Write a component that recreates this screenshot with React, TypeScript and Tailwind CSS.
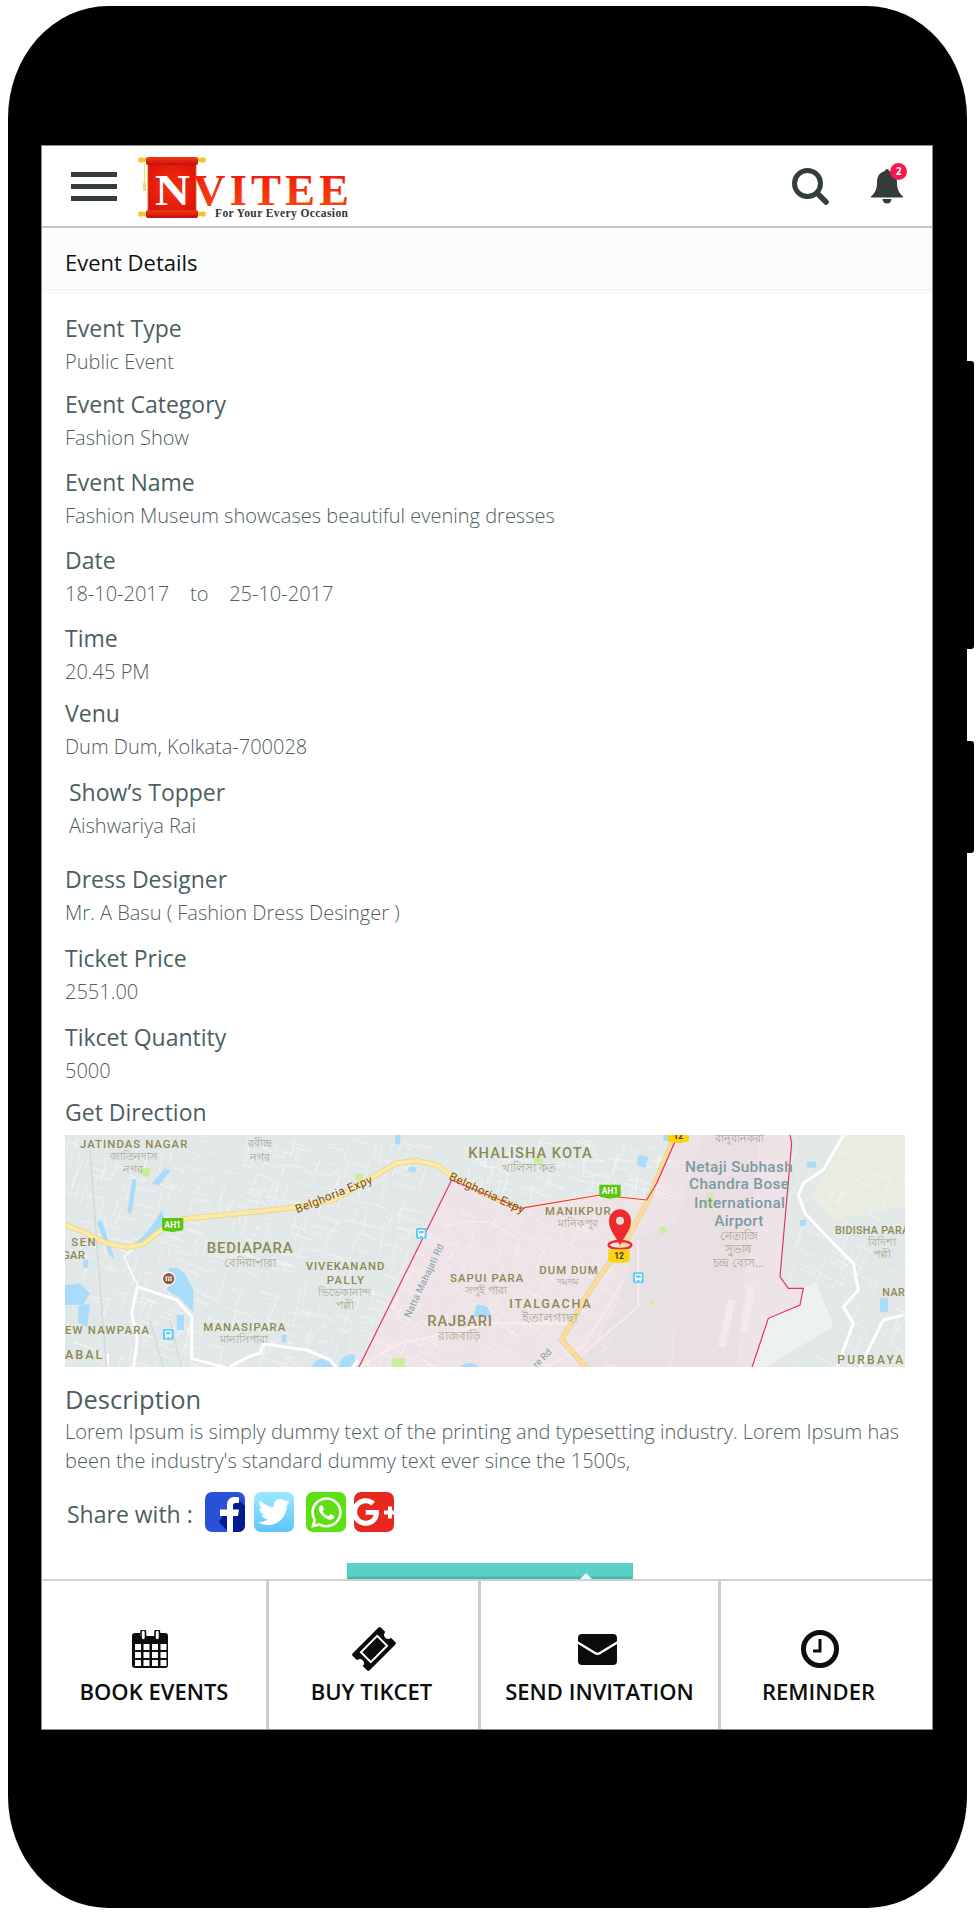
import React from "react";
import { FaTwitter, FaWhatsapp, FaGooglePlusG } from "react-icons/fa";

const fields: { l: string; v: React.ReactNode; cls: string }[] = [
  { l: "Event Type", v: "Public Event", cls: "mt-[22px]" },
  { l: "Event Category", v: "Fashion Show", cls: "mt-[10px]" },
  { l: "Event Name", v: "Fashion Museum showcases beautiful evening dresses", cls: "mt-[12px]" },
  { l: "Date", v: <span className="whitespace-pre">18-10-2017    to    25-10-2017</span>, cls: "mt-[12px]" },
  { l: "Time", v: "20.45 PM", cls: "mt-[12px]" },
  { l: "Venu", v: "Dum Dum, Kolkata-700028", cls: "mt-[9px]" },
  { l: "Show’s Topper", v: "Aishwariya Rai", cls: "mt-[13px] pl-[4px]" },
  { l: "Dress Designer", v: "Mr. A Basu ( Fashion Dress Desinger )", cls: "mt-[21px]" },
  { l: "Ticket Price", v: "2551.00", cls: "mt-[13px]" },
  { l: "Tikcet Quantity", v: "5000", cls: "mt-[13px]" },
];

function rng(seed: number) {
  let s = seed;
  return () => {
    s = (s * 16807) % 2147483647;
    return s / 2147483647;
  };
}

function streets(seed: number, x0: number, y0: number, x1: number, y1: number, n: number, angle: number) {
  const r = rng(seed);
  let d = "";
  for (let i = 0; i < n; i++) {
    const x = x0 + r() * (x1 - x0);
    const y = y0 + r() * (y1 - y0);
    const a = angle + (r() > 0.5 ? Math.PI / 2 : 0) + (r() - 0.5) * 0.25;
    const len = 15 + r() * 55;
    const x2 = x + Math.cos(a) * len;
    const y2 = y + Math.sin(a) * len;
    d += `M${x.toFixed(0)} ${y.toFixed(0)}L${x2.toFixed(0)} ${y2.toFixed(0)}`;
  }
  return d;
}

const PINK = "925,745 1205,180 1290,215 1410,265 1650,225 1790,240 1820,190 1875,65 1900,45 2220,45 2225,70 2190,470 2215,505 2260,505 2250,555 2155,595 2105,745";

function Bus({ x, y }: { x: number; y: number }) {
  return (
    <g transform={`translate(${x} ${y})`}>
      <rect x="-16" y="-16" width="32" height="32" rx="4" fill="#5fcdf5" />
      <rect x="-10" y="-11" width="20" height="19" rx="3" fill="#fff" />
      <rect x="-7" y="-7" width="14" height="7" fill="#5fcdf5" />
      <rect x="-9" y="8" width="5" height="4" fill="#fff" />
      <rect x="4" y="8" width="5" height="4" fill="#fff" />
    </g>
  );
}

function Shield({ x, y, t, fill, color }: { x: number; y: number; t: string; fill: string; color: string }) {
  return (
    <g transform={`translate(${x} ${y})`}>
      <path d="M-32 -20H32V12Q32 18 24 18L0 22L-24 18Q-32 18 -32 12Z" fill={fill} />
      <text x="0" y="9" textAnchor="middle" fontSize="25" fontWeight="700" fill={color}>{t}</text>
    </g>
  );
}

function L({ x, w, y, s, t, c = "#8b8a55" }: { x: number; w: number; y: number; s: number; t: string; c?: string }) {
  return (
    <text x={x} y={y} fontSize={s} fill={c} fontWeight={500} textLength={w} lengthAdjust="spacing">
      {t}
    </text>
  );
}

function B({ x, y, s, t }: { x: number; y: number; s: number; t: string }) {
  return <text x={x} y={y} textAnchor="middle" fontSize={s * 1.22} fill="#a6a98f">{t}</text>;
}

function MapArt() {
  return (
    <svg viewBox="65 1135 840 232" width="840" height="232" className="block" fontFamily="Roboto, 'Noto Sans', sans-serif">
      <rect x="65" y="1135" width="840" height="232" fill="#e2e8e7" />
      <g transform="translate(50 1120) scale(0.33333)">
        {/* park right */}
        <path d="M2380 45H2565V260L2340 300L2285 225L2320 170Z" fill="#e9ece0" />
        <path d="M2250 505L2300 490L2350 620L2140 745H2105L2155 595Z" fill="#edf1f0" />
        {/* district */}
        <polygon points={PINK} fill="#eee3e7" />
        <path d="M1880 300L1960 45H2130L2100 300L2060 745H1870Z" fill="#eadfe3" />
        <path d="M1760 350L1890 300L1860 745H1580L1700 560Z" fill="#e8e1e4" />
        {/* fine streets */}
        <path d={streets(11, 50, 50, 1130, 740, 520, 0.3)} stroke="#fff" strokeWidth="2" fill="none" opacity="0.7" />
        <path d={streets(29, 1000, 270, 1700, 740, 240, 0.5)} stroke="#f9f1f3" strokeWidth="2" fill="none" />
        <path d={streets(47, 1250, 50, 1840, 220, 120, 0.2)} stroke="#fff" strokeWidth="2" fill="none" opacity="0.7" />
        <path d={streets(53, 2230, 60, 2560, 740, 90, 0.5)} stroke="#fff" strokeWidth="2" fill="none" opacity="0.7" />
        {/* runways */}
        <path d="M2045 540L2015 680M2105 500L2080 640" stroke="#f2ebed" strokeWidth="22" fill="none" />
        {/* water */}
        <g fill="#a9dcfb">
          <path d="M355 445Q395 435 415 480L430 510V575L385 530L350 510L365 480Z" />
          <path d="M250 370Q290 350 335 270L345 300L320 345L270 372Z" />
          <path d="M45 495L90 490L120 520L100 555H45Z" />
          <path d="M140 305L155 300L195 420L175 400Z" />
          <path d="M85 560L120 550L112 620L85 610Z" />
          <path d="M247 178H260L245 278H232Z" />
          <path d="M345 145L362 152L325 197L307 190Z" />
          <path d="M870 725Q890 695 915 705L915 745H865Z" />
          <path d="M800 720L830 712L860 745H780Z" />
          <path d="M1280 555Q1320 550 1322 590L1270 590Z" />
          <path d="M1235 735Q1270 720 1290 745H1225Z" />
          <path d="M1765 105L1795 110L1785 145L1760 135Z" />
          <rect x="1075" y="140" width="24" height="16" rx="8" />
          <rect x="1035" y="45" width="16" height="28" />
          <rect x="2490" y="535" width="24" height="42" />
          <rect x="2250" y="300" width="18" height="18" />
          <rect x="2270" y="125" width="28" height="18" />
          <rect x="100" y="420" width="14" height="24" />
          <rect x="380" y="585" width="22" height="45" />
          <rect x="695" y="645" width="14" height="22" />
          <rect x="1840" y="45" width="24" height="18" />
        </g>
        {/* parks */}
        <g fill="#c9ee9a">
          <path d="M275 145H302L296 172L272 165Z" />
          <path d="M912 162H942L934 182H918Z" />
          <circle cx="1465" cy="123" r="14" />
          <rect x="1830" y="320" width="16" height="20" />
          <rect x="1025" y="715" width="40" height="26" />
          <rect x="1798" y="542" width="16" height="9" />
          <rect x="1968" y="220" width="24" height="48" rx="8" fill="#d8e9b0" />
        </g>
        {/* white main roads */}
        <g stroke="#fff" fill="none" strokeWidth="9" strokeLinejoin="round">
          <path d="M262 500L380 540L425 590L425 715L535 745" />
          <path d="M262 500L245 580L262 660L250 745" />
          <path d="M540 740Q600 705 630 700L640 672L770 690L840 720L860 745" />
          <path d="M172 700L172 745" />
          <path d="M905 745L925 720" />
          <path d="M2380 45L2320 150L2260 190L2245 225L2265 280L2350 370L2410 430L2425 510L2380 560L2410 610L2360 745" />
          <path d="M2560 585L2500 600L2450 700L2430 745" />
        </g>
        <path d="M222 410L262 495M222 410L250 385" stroke="#fff" strokeWidth="4" fill="none" />
        <path d="M120 90L150 500M150 500L170 745" stroke="#d3dbda" strokeWidth="5" fill="none" />
        <path d="M300 600L340 745M360 600L395 745" stroke="#d3dbda" strokeWidth="4" fill="none" />
        {/* pink roads */}
        <g stroke="#fbeaee" fill="none" strokeWidth="8">
          <path d="M925 745L1010 690L1050 670L1150 650L1320 610H1560L1560 620" />
          <path d="M1720 480L1600 680L1480 745" strokeWidth="5" />
          <path d="M1765 360V560L1600 700" strokeWidth="5" />
          <path d="M1180 320L1240 305L1320 305L1410 360" strokeWidth="4" />
        </g>
        {/* NH12 */}
        <path d="M1875 45L1790 250L1730 360L1670 440L1620 510L1535 660L1610 745" stroke="#ecce8c" strokeWidth="16" fill="none" strokeLinejoin="round" />
        <path d="M1875 45L1790 250L1730 360L1670 440L1620 510L1535 660L1610 745" stroke="#f8dd9c" strokeWidth="12" fill="none" strokeLinejoin="round" />
        {/* Belghoria */}
        <path d="M45 315L100 335L170 370L230 382L280 372L340 325L400 297L520 285L740 262L850 240L960 175L1040 130L1100 122L1160 135L1205 165L1290 215L1410 265" stroke="#ecd488" strokeWidth="17" fill="none" strokeLinejoin="round" />
        <path d="M45 315L100 335L170 370L230 382L280 372L340 325L400 297L520 285L740 262L850 240L960 175L1040 130L1100 122L1160 135L1205 165L1290 215L1410 265" stroke="#fbeaa5" strokeWidth="12" fill="none" strokeLinejoin="round" />
        <path d="M1410 265L1650 225L1790 240" stroke="#fbeec0" strokeWidth="10" fill="none" />
        {/* boundary */}
        <path d="M925 745L1205 180L1290 215L1410 265L1650 225L1790 240L1820 190L1875 65L1900 45M2220 45L2225 70L2190 470L2215 505L2260 505L2250 555L2155 595L2105 745" stroke="#e8305f" strokeWidth="3.500" fill="none" />
        {/* badges */}
        <Shield x={368} y={314} t="AH1" fill="#5cc412" color="#fff" />
        <Shield x={1680} y={214} t="AH1" fill="#5cc412" color="#fff" />
        <Shield x={1885} y={48} t="12" fill="#fbd40f" color="#333" />
        <Bus x={1114} y={340} />
        <Bus x={355} y={643} />
        <Bus x={1765} y={473} />
        <circle cx="356" cy="476" r="21" fill="#fff" />
        <circle cx="356" cy="476" r="17" fill="#8d5b46" />
        <rect x="345" y="470" width="22" height="3" fill="#fff" />
        <rect x="347" y="475" width="4" height="8" fill="#fff" />
        <rect x="354" y="475" width="4" height="8" fill="#fff" />
        <rect x="361" y="475" width="4" height="8" fill="#fff" />
        {/* road labels */}
        <g fill="#7a4a10" fontSize="35" stroke="#fff" strokeWidth="0.6" paintOrder="stroke">
          <text transform="translate(742 280) rotate(-22)" textLength={245} lengthAdjust="spacing">Belghoria Expy</text>
          <text transform="translate(1195 178) rotate(25)" textLength={245} lengthAdjust="spacing">Belghoria Expy</text>
        </g>
        <text transform="translate(1080 595) rotate(-65)" fontSize="29" fill="#80a0a8" textLength={240} lengthAdjust="spacing">Natta Mahajati Rd</text>
        <text transform="translate(1460 745) rotate(-45)" fontSize="29" fill="#80a0a8">re Rd</text>
        {/* place labels */}
        <L x={90} w={322} y={85} s={34} t="JATINDAS NAGAR" />
        <L x={22} w={115} y={377} s={34} t="N SEN" />
        <L x={36} w={69} y={416} s={34} t="GAR" />
        <L x={470} w={258} y={400} s={45} t="BEDIAPARA" />
        <L x={767} w={236} y={450} s={34} t="VIVEKANAND" />
        <L x={830} w={112} y={493} s={34} t="PALLY" />
        <L x={45} w={252} y={642} s={34} t="EW NAWPARA" />
        <L x={45} w={112} y={718} s={38} t="ABAL" />
        <L x={460} w={246} y={633} s={34} t="MANASIPARA" />
        <L x={1200} w={220} y={487} s={34} t="SAPUI PARA" />
        <L x={1132} w={194} y={618} s={44} t="RAJBARI" />
        <L x={1255} w={370} y={113} s={44} t="KHALISHA KOTA" />
        <L x={1485} w={197} y={285} s={34} t="MANIKPUR" />
        <L x={1468} w={175} y={462} s={34} t="DUM DUM" />
        <L x={1378} w={244} y={565} s={38} t="ITALGACHA" />
        <L x={1905} w={323} y={155} s={46} t="Netaji Subhash" c="#7b9aa1" />
        <L x={1917} w={300} y={208} s={46} t="Chandra Bose" c="#7b9aa1" />
        <L x={1932} w={273} y={263} s={46} t="International" c="#7b9aa1" />
        <L x={1993} w={147} y={317} s={46} t="Airport" c="#7b9aa1" />
        <L x={2355} w={222} y={341} s={32} t="BIDISHA PARA" />
        <L x={2497} w={90} y={527} s={32} t="NARA" />
        <L x={2362} w={198} y={733} s={36} t="PURBAYA" />
        {/* bengali */}
        <B x={250} y={120} s={28} t="জাতিনদাস" />
        <B x={250} y={160} s={28} t="নগর" />
        <B x={630} y={82} s={28} t="রবীন্দ্র" />
        <B x={630} y={122} s={28} t="নগর" />
        <B x={600} y={441} s={30} t="বেদিয়াপারা" />
        <B x={885} y={528} s={28} t="ভিভেকানান্দ" />
        <B x={885} y={566} s={28} t="পল্লী" />
        <B x={583} y={668} s={28} t="মানাসিপারা" />
        <B x={1308} y={522} s={28} t="সপুই পারা" />
        <B x={1228} y={660} s={30} t="রাজবাড়ি" />
        <B x={1438} y={156} s={30} t="খালিসা কত" />
        <B x={1584} y={320} s={28} t="মানিকপুর" />
        <B x={1555} y={496} s={24} t="দমদম" />
        <B x={1500} y={606} s={32} t="ইতালগাছা" />
        <B x={2067} y={360} s={30} t="নেতাজি" />
        <B x={2067} y={400} s={30} t="সুভাষ" />
        <B x={2067} y={442} s={30} t="চন্দ্র বোস..." />
        <B x={2495} y={378} s={28} t="বিদিশা" />
        <B x={2495} y={415} s={28} t="পল্লী" />
        <B x={2070} y={65} s={28} t="বানুবানকরা" />
        {/* pin */}
        <ellipse cx="1710" cy="375" rx="34" ry="12" fill="none" stroke="#ee2a2e" strokeWidth="7" />
        <path d="M1710 376C1695 345 1677 330 1677 303A33 35 0 0 1 1743 303C1743 330 1725 345 1710 376Z" fill="#ee2a2e" />
        <circle cx="1710" cy="302" r="12" fill="#e6dcdc" />
        <Shield x={1707} y={408} t="12" fill="#fbd40f" color="#333" />
      </g>
    </svg>
  );
}

function Logo() {
  return (
    <svg width="216" height="66" viewBox="136 152 216 66" className="block" fontFamily="'Liberation Serif', serif">
      <defs>
        <linearGradient id="lg" x1="0" y1="0" x2="0" y2="1">
          <stop offset="0" stopColor="#ec1410" />
          <stop offset="1" stopColor="#ff4d0a" />
        </linearGradient>
        <radialGradient id="rg" cx="0.5" cy="0.5" r="0.7">
          <stop offset="0" stopColor="#f4330f" />
          <stop offset="1" stopColor="#dc0f0a" />
        </radialGradient>
        <linearGradient id="rl" x1="0" y1="0" x2="0" y2="1">
          <stop offset="0" stopColor="#f23b14" />
          <stop offset="1" stopColor="#c40f0a" />
        </linearGradient>
      </defs>
      <rect x="148" y="161" width="48" height="47" fill="url(#rg)" stroke="#b4700e" strokeWidth="0.8" />
      <rect x="146" y="154" width="52" height="8" rx="2" fill="url(#rl)" />
      <rect x="146" y="207" width="52" height="8" rx="2" fill="url(#rl)" />
      <g fill="#f3c52c">
        <circle cx="141" cy="157" r="2.800" />
        <circle cx="203" cy="157" r="2.800" />
        <circle cx="141" cy="211" r="2.800" />
        <circle cx="203" cy="211" r="2.800" />
        <rect x="143" y="155" width="3" height="4" />
        <rect x="198" y="155" width="3" height="4" />
        <rect x="143" y="209" width="3" height="4" />
        <rect x="198" y="209" width="3" height="4" />
      </g>
      <path d="M144.500 160V180" stroke="#f4d33d" strokeWidth="0.8" />
      <rect x="143" y="180" width="3" height="8" fill="#ecd97a" />
      <text x="155" y="202" fontSize="45" fontWeight="700" fill="#fff" textLength="35" lengthAdjust="spacingAndGlyphs">N</text>
      <text x="193" y="202" fontSize="45" fontWeight="700" fill="url(#lg)" textLength="156" lengthAdjust="spacing">VITEE</text>
      <text x="215" y="214" fontSize="11.500" fontWeight="700" fill="#333" textLength="133" lengthAdjust="spacing">For Your Every Occasion</text>
    </svg>
  );
}

function FacebookTile() {
  return (
    <svg width="40" height="40" viewBox="0 0 40 40" className="block">
      <rect width="40" height="40" rx="7" fill="#2a50d8" />
      <path d="M40 14V33Q40 40 33 40H24L14 30L27 8L32 6Z" fill="#001c8e" />
      <path d="M22 40V24H15V17.500H22V13C22 7.500 25.500 5 30 5C31.500 5 33 5.200 34 5.400V11H31C28.500 11 28 12 28 14V17.500H34L33 24H28V40Z" fill="#fff" />
    </svg>
  );
}

function CalendarIcon() {
  return (
    <svg width="36" height="38" viewBox="0 0 36 38" className="block">
      <path d="M3 3H8V6H28V3H33Q36 3 36 6V35Q36 38 33 38H3Q0 38 0 35V6Q0 3 3 3Z" fill="#0b0d0d" />
      <rect x="9" y="0" width="4.500" height="10" rx="2.200" fill="#fff" stroke="#0b0d0d" strokeWidth="1.600" />
      <rect x="23" y="0" width="4.500" height="10" rx="2.200" fill="#fff" stroke="#0b0d0d" strokeWidth="1.600" />
      <g fill="#fff">
        {[3, 11.5, 20, 28.5].flatMap((x) =>
          [14, 22, 30].map((y) => <rect key={`${x}-${y}`} x={x} y={y} width="6" height="6" />)
        )}
      </g>
    </svg>
  );
}

function TicketIcon() {
  return (
    <svg width="44" height="44" viewBox="-22 -22 44 44" className="block">
      <g transform="rotate(-45)">
        <path d="M-18 -12H18Q20 -12 20 -10V-4A4 4 0 0 0 20 4V10Q20 12 18 12H-18Q-20 12 -20 10V4A4 4 0 0 0 -20 -4V-10Q-20 -12 -18 -12Z" fill="#0b0d0d" />
        <rect x="-11.500" y="-7" width="23" height="14" fill="none" stroke="#fff" strokeWidth="2" />
      </g>
    </svg>
  );
}

function MailIcon() {
  return (
    <svg width="39" height="31" viewBox="0 0 39 31" className="block">
      <rect width="39" height="31" rx="4" fill="#0b0d0d" />
      <path d="M-1 8L17 19Q19.500 20.500 22 19L40 8" stroke="#fff" strokeWidth="2.400" fill="none" />
    </svg>
  );
}

function ClockIcon() {
  return (
    <svg width="38" height="38" viewBox="0 0 38 38" className="block">
      <circle cx="19" cy="19" r="16.500" fill="none" stroke="#0b0d0d" strokeWidth="5" />
      <path d="M19 9V21H12" fill="none" stroke="#0b0d0d" strokeWidth="3" />
    </svg>
  );
}

const nav = [
  { t: "BOOK EVENTS", i: <CalendarIcon />, cell: "w-[227px] border-r-[3px]", icon: "pr-[8px]", label: "" },
  { t: "BUY TIKCET", i: <TicketIcon />, cell: "w-[212px] border-r-[3px]", icon: "", label: "pr-[4px]" },
  { t: "SEND INVITATION", i: <MailIcon />, cell: "w-[240px] border-r-[3px]", icon: "pr-[5px]", label: "" },
  { t: "REMINDER", i: <ClockIcon />, cell: "flex-1 pr-[16px]", icon: "pl-[2px]", label: "" },
];

export default function App() {
  return (
    <div className="relative w-[980px] h-[1914px] bg-white pt-[6px] pl-[8px] overflow-hidden" style={{ fontFamily: "'Open Sans', sans-serif" }}>
      <div className="absolute left-[967px] top-[361px] w-[7px] h-[288px] bg-black rounded-r-[3px]" />
      <div className="absolute left-[967px] top-[741px] w-[7px] h-[112px] bg-black rounded-r-[3px]" />
      <div className="relative w-[959px] h-[1902px] bg-black rounded-[100px/112px] pt-[140px] pl-[34px]">
        <div className="w-[890px] h-[1583px] bg-white flex flex-col shadow-[0_0_0_1px_#8a8a8a]">
          <header className="h-[82px] shrink-0 flex items-center border-b-2 border-[#c4c6c6] shadow-[0_1px_1px_rgba(0,0,0,0.1)]">
            <div className="ml-[29px] w-[46px] flex flex-col gap-[7px]">
              <div className="h-[5px] bg-[#343c3c]" />
              <div className="h-[5px] bg-[#343c3c]" />
              <div className="h-[5px] bg-[#343c3c]" />
            </div>
            <div className="ml-[19px] mt-[3px]"><Logo /></div>
            <svg width="37" height="37" viewBox="0 0 37 37" className="ml-auto mt-[1px] block">
              <circle cx="15.500" cy="15.500" r="13" fill="none" stroke="#343c3c" strokeWidth="5" />
              <path d="M25 25L34 34" stroke="#343c3c" strokeWidth="5.500" strokeLinecap="round" />
            </svg>
            <div className="relative ml-[42px] mr-[29px] w-[32px] h-[36px]">
              <svg width="32" height="36" viewBox="0 0 32 36" className="block">
                <path d="M14 3A2 2 0 0 1 18 3C24 4.500 26 9 26 15C26 22 29 26 32 28.500V29.500H0V28.500C3 26 6 22 6 15C6 9 8 4.500 14 3Z" fill="#343c3c" />
                <path d="M11.500 31A4.500 4.500 0 0 0 20.500 31Z" fill="#343c3c" />
              </svg>
              <div className="absolute left-[19px] top-[-5px] w-[17px] h-[17px] rounded-full bg-[#f5174f] text-white text-[10px] font-bold leading-[17px] text-center">2</div>
            </div>
          </header>
          <div className="h-[62px] shrink-0 flex items-center pl-[23px] pt-[7px] bg-[#fbfcfc] border-b border-[#f0f2f2] text-[22px] text-[#111]">Event Details</div>
          <main className="flex-1 flex flex-col pl-[23px] pr-[27px] bg-gradient-to-b from-[#fafbfb] to-white to-[8px]">
            {fields.map((f) => (
              <section key={f.l} className={f.cls}>
                <div className="text-[23px] leading-[33px] text-[#4b5f5f]">{f.l}</div>
                <div className="text-[20px] leading-[33px] font-light text-[#4d6060]">{f.v}</div>
              </section>
            ))}
            <div className="mt-[9px] text-[23px] leading-[33px] text-[#4b5f5f]">Get Direction</div>
            <div className="mt-[6px]"><MapArt /></div>
            <div className="mt-[16px] text-[25.500px] leading-[33px] text-[#4b5f5f]">Description</div>
            <p className="mt-[1px] text-[20px] leading-[29px] font-light text-[#4d6060] whitespace-pre-line">{"Lorem Ipsum is simply dummy text of the printing and typesetting industry. Lorem Ipsum has\nbeen the industry's standard dummy text ever since the 1500s,"}</p>
            <div className="mt-[17px] flex items-center">
              <span className="ml-[2px] w-[138px] mt-[4px] text-[23px] text-[#4b5f5f] whitespace-nowrap">Share with :</span>
              <FacebookTile />
              <div className="ml-[9px] w-[40px] h-[40px] rounded-[7px] bg-gradient-to-b from-[#9beaff] to-[#5cc4fb] flex items-center justify-center">
                <FaTwitter className="text-white text-[32px]" />
              </div>
              <div className="ml-[12px] w-[40px] h-[40px] rounded-[7px] bg-[#5ce012] flex items-center justify-center">
                <FaWhatsapp className="text-white text-[35px]" />
              </div>
              <div className="ml-[8px] w-[40px] h-[40px] rounded-[7px] bg-[#e8281e] flex items-center justify-center overflow-hidden">
                <FaGooglePlusG className="text-white text-[46px] shrink-0" />
              </div>
            </div>
            <div className="relative mt-auto ml-[282px] w-[286px] h-[16px] bg-[#5bd0c8] shadow-[inset_0_-2px_2px_rgba(0,80,70,0.25)]">
              <div className="absolute left-[233px] bottom-0 w-0 h-0 border-x-[6px] border-x-transparent border-b-[6px] border-b-[#f0f5f5]" />
            </div>
          </main>
          <nav className="h-[150px] shrink-0 flex border-t-2 border-[#cfd1d1] text-[#0c0e0e]">
            {nav.map((n) => (
              <div key={n.t} className={`${n.cell} border-[#cbcdcd] flex flex-col items-center`}>
                <div className={`h-[44px] mt-[46px] flex items-center justify-center ${n.icon}`}>{n.i}</div>
                <div className={`mt-[6px] text-[22px] leading-[28px] font-semibold whitespace-nowrap ${n.label}`}>{n.t}</div>
              </div>
            ))}
          </nav>
        </div>
      </div>
    </div>
  );
}
